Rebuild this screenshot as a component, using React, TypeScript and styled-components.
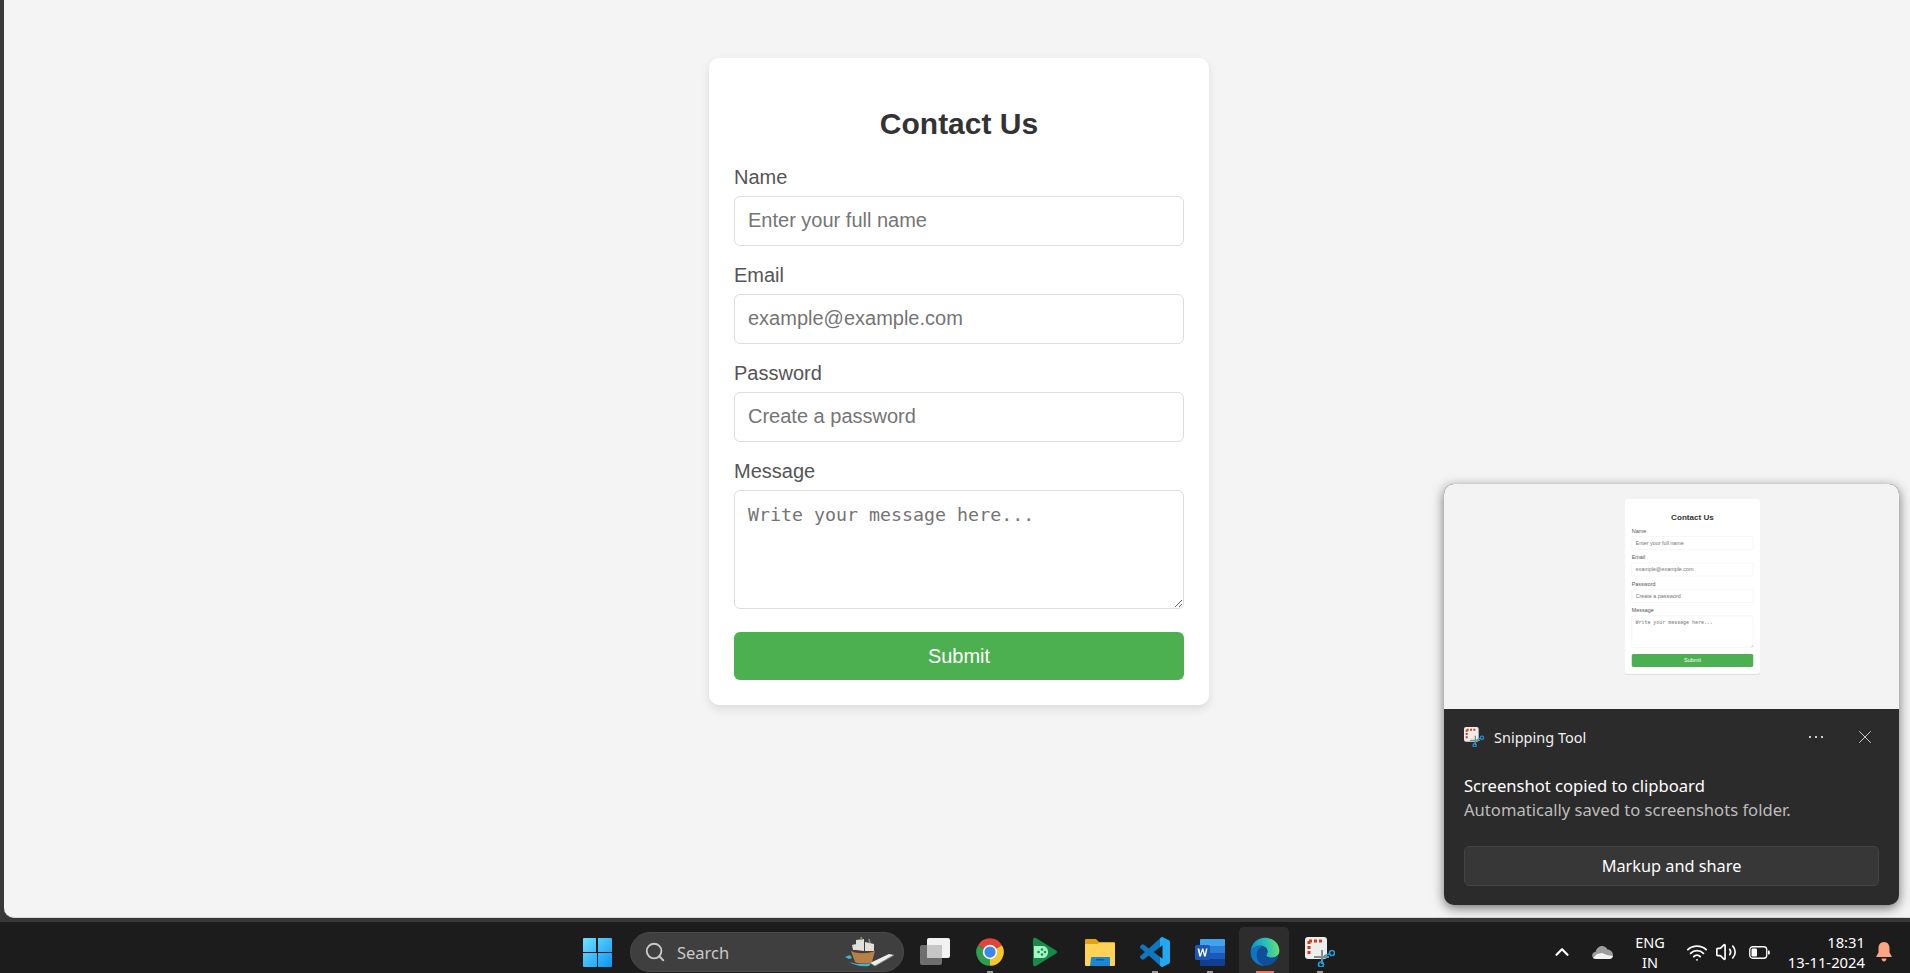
import React from 'react';
import styled, { createGlobalStyle } from 'styled-components';
import { ChevronUp, Search, Volume2, Wifi, X } from 'lucide-react';

const GlobalStyle = createGlobalStyle`
	html, body {
		margin: 0;
		padding: 0;
		height: 100%;
		overflow: hidden;
		background: #3a3a3a;
	}
	* {
		box-sizing: border-box;
	}
`;

const Desktop = styled.div`
	width: 1910px;
	height: 973px;
	position: relative;
	display: flex;
	flex-direction: column;
	overflow: hidden;
	background: #383838;
`;

const BrowserPage = styled.main`
	height: 918px;
	flex-shrink: 0;
	margin-left: 4px;
	padding: 58px 0 0 4px;
	display: flex;
	justify-content: center;
	align-items: flex-start;
	background: #f4f4f4;
	border-bottom: 1px solid #d6d6d6;
	border-bottom-left-radius: 10px;
`;

const Card = styled.form`
	width: 500px;
	flex-shrink: 0;
	padding: 25px;
	background: #fff;
	border-radius: 10px;
	box-shadow: 0 4px 10px rgba(0, 0, 0, 0.1);
	font-family: 'Liberation Sans', Arial, sans-serif;
`;

const Title = styled.h2`
	margin: 24px 0 26px;
	text-align: center;
	font-size: 30px;
	line-height: 33px;
	font-weight: 700;
	color: #333;
`;

const Label = styled.label`
	display: block;
	margin-bottom: 7px;
	font-size: 20px;
	line-height: 23px;
	color: #555;
`;

const Input = styled.input`
	display: block;
	width: 100%;
	height: 50px;
	margin-bottom: 18px;
	padding: 0 13px 2px;
	border: 1px solid #ddd;
	border-radius: 6px;
	background: #fff;
	font-family: 'Liberation Sans', Arial, sans-serif;
	font-size: 20px;
	&::placeholder {
		color: #757575;
	}
`;

const MessageBox = styled.textarea`
	display: block;
	width: 100%;
	height: 119px;
	margin-bottom: 23px;
	padding: 13px 13px;
	border: 1px solid #ddd;
	border-radius: 6px;
	background: #fff;
	font-family: 'DejaVu Sans Mono', monospace;
	font-size: 18.3px;
	resize: vertical;
	&::placeholder {
		color: #757575;
	}
`;

const SubmitButton = styled.button`
	display: block;
	width: 100%;
	height: 48px;
	border: 0;
	border-radius: 6px;
	background: #4caf50;
	color: #fff;
	font-family: 'Liberation Sans', Arial, sans-serif;
	font-size: 20px;
`;

const Toast = styled.aside`
	position: absolute;
	left: 1444px;
	top: 484px;
	width: 455px;
	height: 421px;
	display: flex;
	flex-direction: column;
	overflow: hidden;
	border-radius: 10px;
	background: #2b2b2b;
	box-shadow: 0 3px 12px rgba(0, 0, 0, 0.55);
	font-family: 'Noto Sans', 'Open Sans', sans-serif;
`;

const Preview = styled.div`
	height: 225px;
	flex-shrink: 0;
	padding-top: 15px;
	display: flex;
	justify-content: center;
	background: #f3f3f3;
`;

const PreviewFrame = styled.div`
	width: 135px;
	height: 176px;
	margin-left: 42px;
	overflow: hidden;
`;

const PreviewScale = styled.div`
	width: 500px;
	transform: scale(0.27);
	transform-origin: top left;
`;

const ToastBody = styled.div`
	flex: 1;
	padding: 18px 20px 19px;
	display: flex;
	flex-direction: column;
`;

const ToastHeader = styled.div`
	display: flex;
	align-items: center;
	height: 20px;
	color: #f0f0f0;
	font-size: 14.5px;
`;

const AppName = styled.span`
	margin-left: 10px;
	flex: 1;
`;

const MoreDots = styled.span`
	width: 14px;
	height: 2px;
	margin-right: 31px;
	background: radial-gradient(circle at 1px 1px, #cfcfcf 1px, transparent 1.2px) 0 0 / 6px 2px repeat-x;
`;

const CloseBox = styled.span`
	display: flex;
	margin-right: 3px;
	color: #d8d8d8;
`;

const ToastTitle = styled.div`
	margin-top: 27px;
	font-size: 16.6px;
	line-height: 24px;
	color: #fff;
`;

const ToastText = styled.div`
	font-size: 16.6px;
	line-height: 24px;
	color: #bdbdbd;
`;

const ToastAction = styled.button`
	margin-top: auto;
	height: 40px;
	border: 1px solid #444;
	border-radius: 5px;
	background: #373737;
	color: #fff;
	font-family: 'Noto Sans', 'Open Sans', sans-serif;
	font-size: 16.3px;
`;

const Taskbar = styled.footer`
	height: 51px;
	margin-top: 4px;
	flex-shrink: 0;
	padding: 5px 0 0 570px;
	display: flex;
	align-items: flex-start;
	background: #1c1c1c;
	font-family: 'Noto Sans', 'Open Sans', sans-serif;
	color: #fff;
`;

const AppSlot = styled.div<{ $active?: boolean; $dot?: string }>`
	width: 55px;
	height: 46px;
	padding-top: 4px;
	flex-shrink: 0;
	position: relative;
	display: flex;
	align-items: center;
	justify-content: center;
	&::before {
		content: '';
		display: ${(props) => (props.$active ? 'block' : 'none')};
		position: absolute;
		left: 2px;
		right: 3px;
		top: 0;
		bottom: 0;
		border-radius: 5px 5px 0 0;
		background: #2d2d2d;
	}
	&::after {
		content: '';
		display: ${(props) => (props.$dot ? 'block' : 'none')};
		position: absolute;
		left: 50%;
		bottom: 0;
		width: ${(props) => (props.$active ? '18px' : '6px')};
		height: 2px;
		margin-left: ${(props) => (props.$active ? '-9px' : '-3px')};
		background: ${(props) => props.$dot || 'none'};
	}
	svg {
		position: relative;
	}
`;

const SearchPill = styled.div`
	width: 274px;
	height: 40px;
	margin: 5px 3px 0 5px;
	flex-shrink: 0;
	padding: 0 8px 0 13px;
	display: flex;
	align-items: center;
	border-radius: 20px;
	border: 1px solid #4a4a4a;
	background: #3f3f3f;
	color: #c9c9c9;
	font-size: 16.5px;
`;

const SearchLabel = styled.span`
	margin-left: 11px;
	flex: 1;
`;

const Tray = styled.div`
	margin: 5px 0 0 auto;
	height: 40px;
	padding-right: 18px;
	display: flex;
	align-items: center;
`;

const TrayBox = styled.div<{ $width: number; $right?: number }>`
	width: ${(props) => props.$width}px;
	margin-right: ${(props) => props.$right || 0}px;
	display: flex;
	align-items: center;
	justify-content: center;
`;

const LangText = styled.div`
	width: 46px;
	margin-right: 13px;
	text-align: center;
	font-size: 14.5px;
	line-height: 20px;
`;

const Clock = styled.div`
	width: 95px;
	margin-right: 11px;
	text-align: right;
	font-size: 14.8px;
	line-height: 20px;
`;

const ContactForm = () => (
	<Card>
		<Title>Contact Us</Title>
		<Label>Name</Label>
		<Input placeholder='Enter your full name' />
		<Label>Email</Label>
		<Input placeholder='example@example.com' />
		<Label>Password</Label>
		<Input placeholder='Create a password' />
		<Label>Message</Label>
		<MessageBox placeholder='Write your message here...' />
		<SubmitButton type='button'>Submit</SubmitButton>
	</Card>
);

const WindowsLogo = () => (
	<svg width='29' height='29' viewBox='0 0 29 29'>
		<defs>
			<linearGradient id='win' x1='0' y1='0' x2='1' y2='1'>
				<stop offset='0' stopColor='#6fe2ff' />
				<stop offset='1' stopColor='#0a94f5' />
			</linearGradient>
		</defs>
		<path d='M1 0h12v14H0V1a1 1 0 0 1 1-1zM15 0h13a1 1 0 0 1 1 1v13H15zM0 15h14v14H1a1 1 0 0 1-1-1zM15 15h14v13a1 1 0 0 1-1 1H15z' fill='url(#win)' />
	</svg>
);

const ShipDoodle = () => (
	<svg width='52' height='32' viewBox='0 0 52 32'>
		<path d='M2 21l5-2 2 3-3 1zM6 26c6 2 14 3 22 1l-2 3c-8 1-15-1-20-4z' fill='#3fb7d4' />
		<path d='M8 15c6 3 16 3 24 0l-3 11c-6 2-13 2-17 0z' fill='#b97f46' />
		<path d='M13 4l8-1v12l-8-1zM22 6l9 2v7l-9 0zM9 9l4-1v6l-3 0z' fill='#e2dfd8' />
		<path d='M18 1l1 3M26 3l1 4' stroke='#8d8d8d' strokeWidth='1.5' />
		<path d='M27 27l19-9 5 1-19 11z' fill='#efeee8' />
		<path d='M27 27l5 3 19-11' stroke='#7e8f8f' fill='none' />
	</svg>
);

const TaskViewIcon = () => (
	<svg width='30' height='30' viewBox='0 0 30 30'>
		<rect x='0' y='8' width='22' height='20' rx='2' fill='#6e6e6e' />
		<rect x='7' y='1' width='23' height='20' rx='2' fill='#f1f1f1' />
		<rect x='7' y='8' width='15' height='13' fill='#c6c6c6' />
	</svg>
);

const ChromeIcon = () => (
	<svg width='30' height='30' viewBox='0 0 48 48'>
		<path d='M24 24L4.9 13A22 22 0 0 1 43.1 13z' fill='#e0443a' />
		<path d='M24 24L43.1 13A22 22 0 0 1 24 46z' fill='#f7c62f' />
		<path d='M24 24L24 46A22 22 0 0 1 4.9 13z' fill='#2f9e4f' />
		<circle cx='24' cy='24' r='11.5' fill='#fff' />
		<circle cx='24' cy='24' r='9' fill='#3f86ea' />
	</svg>
);

const PlayGamesIcon = () => (
	<svg width='26' height='30' viewBox='0 0 26 30'>
		<path d='M1 2.5C1 1 2.5.4 4 1l20 12.4c1.400.9 1.400 2.300 0 3.200L4 29c-1.500.6-3 0-3-1.500z' fill='#168a46' />
		<path d='M2 9h9c3 0 5 3 5 6s-2 6-5 6H2z' fill='#a6f5c4' />
		<circle cx='6.500' cy='15' r='1.300' fill='#168a46' />
		<circle cx='10' cy='12.500' r='1.200' fill='#168a46' />
		<circle cx='10' cy='17.500' r='1.200' fill='#168a46' />
		<circle cx='13' cy='15' r='1.200' fill='#168a46' />
	</svg>
);

const FolderIcon = () => (
	<svg width='30' height='27' viewBox='0 0 30 27'>
		<path d='M1 0h10l3 3h15a1 1 0 0 1 1 1v6H0V1a1 1 0 0 1 1-1z' fill='#e3a30c' />
		<path d='M0 5h12l2-1h15a1 1 0 0 1 1 1v21a1 1 0 0 1-1 1H1a1 1 0 0 1-1-1z' fill='#fdd257' />
		<path d='M6 19a1 1 0 0 1 1-1h17a1 1 0 0 1 1 1v8H5z' fill='#1a86d6' />
		<rect x='11' y='20' width='8' height='1.500' fill='#0d5c9c' />
	</svg>
);

const VsCodeIcon = () => (
	<svg width='30' height='30' viewBox='0 0 24 24'>
		<defs>
			<linearGradient id='vs' x1='0' y1='0' x2='1' y2='0'>
				<stop offset='0.68' stopColor='#0f77c0' />
				<stop offset='0.68' stopColor='#23a8f2' />
			</linearGradient>
		</defs>
		<path
			d='M23.15 2.587L18.21.21a1.494 1.494 0 0 0-1.705.29l-9.46 8.63-4.12-3.128a.999.999 0 0 0-1.276.057L.327 7.261A1 1 0 0 0 .326 8.74L3.899 12 .326 15.26a1 1 0 0 0 .001 1.479L1.65 17.94a.999.999 0 0 0 1.276.057l4.12-3.128 9.46 8.63a1.492 1.492 0 0 0 1.704.29l4.942-2.377A1.5 1.5 0 0 0 24 20.06V3.939a1.5 1.5 0 0 0-.85-1.352zm-5.146 14.861L10.826 12l7.178-5.448v10.896z'
			fill='url(#vs)'
		/>
	</svg>
);

const WordIcon = () => (
	<svg width='30' height='27' viewBox='0 0 30 27'>
		<rect x='5' y='0' width='25' height='7' rx='1' fill='#41a5ee' />
		<rect x='5' y='7' width='25' height='7' fill='#2b7cd3' />
		<rect x='5' y='14' width='25' height='7' fill='#185abd' />
		<rect x='5' y='20' width='25' height='7' rx='1' fill='#103f91' />
		<rect x='0' y='6' width='15' height='15' rx='1.500' fill='#1b58b5' />
		<path d='M2.500 9.500l1.800 8h1.600l1.600-5.500 1.600 5.500h1.600l1.800-8h-1.500l-1.100 5.500-1.600-5.500H7l-1.600 5.500-1.100-5.500z' fill='#fff' />
	</svg>
);

const EdgeIcon = () => (
	<svg width='30' height='30' viewBox='0 0 48 48'>
		<defs>
			<linearGradient id='edgeTop' x1='0' y1='0.6' x2='1' y2='0.5'>
				<stop offset='0' stopColor='#0c8fd0' />
				<stop offset='0.6' stopColor='#2ec3b4' />
				<stop offset='1' stopColor='#6ee06a' />
			</linearGradient>
		</defs>
		<path d='M1 23C2 10 12 1 24 1c14 0 23 10 23 21 0 7-5 11-12 11-5 0-9-2-9-4 0-1 2-2 2-6 0-5-5-9-11-9C9 14 3 18 1 23z' fill='url(#edgeTop)' />
		<path d='M1 23c2-6 9-10 16-9 2 1 3 1 4 2-6 1-10 6-10 13 0 8 6 15 14 17C12 47 0 37 1 23z' fill='#0d75c2' />
		<path d='M21 16c5 1 7 4 7 7 0 3-2 4-2 6 0 3 5 5 10 4 4 0 8-2 10-5-2 10-11 18-21 18-8-2-14-9-14-17 0-7 4-12 10-13z' fill='#0f4e9a' />
	</svg>
);

const SnipIcon = ({ size }: { size: number }) => (
	<svg width={size} height={size} viewBox='0 0 30 30'>
		<rect x='0' y='0' width='22' height='22' rx='3' fill='#ededed' />
		<path d='M4 4h3M9 4h3M14 4h3M4 4v3M4 9v3M4 14v3' stroke='#d23a1c' strokeWidth='3' fill='none' />
		<path d='M9 20L24 20M17 13l0 14' stroke='#8a8a8a' strokeWidth='2' />
		<circle cx='27' cy='16' r='2.500' fill='none' stroke='#1e9be0' strokeWidth='1.700' />
		<circle cx='16' cy='27.500' r='2.500' fill='none' stroke='#1e9be0' strokeWidth='1.700' />
		<path d='M19 19l5-2M18 21l-1 4' stroke='#1e9be0' strokeWidth='1.500' />
	</svg>
);

const CloudIcon = () => (
	<svg width='21' height='13' viewBox='0 0 21 13'>
		<path d='M4 13a3.500 3.500 0 0 1-.5-7C4.500 2.500 7 0 10 0c2.500 0 4.500 1.500 5.500 3.500 3 0 5.500 2.500 5.500 5.500 0 2-1.500 4-3.500 4z' fill='#9c9c9c' />
		<path d='M1 12l4-4 5-1 5 2 6 1-1 2-2 1H4z' fill='#f2f2f2' />
	</svg>
);

const BatteryIcon = () => (
	<svg width='21' height='13' viewBox='0 0 21 13'>
		<rect x='.75' y='.75' width='17' height='11.500' rx='3' fill='none' stroke='#fff' strokeWidth='1.300' />
		<rect x='2.500' y='2.500' width='5.500' height='8' rx='1.200' fill='#fff' />
		<path d='M19 4.500h.6a1.200 1.200 0 0 1 1.200 1.200v1.600a1.200 1.200 0 0 1-1.200 1.200H19z' fill='#fff' />
	</svg>
);

const BellIcon = () => (
	<svg width='16' height='20' viewBox='0 0 16 20'>
		<path d='M8 0c3.500 0 5.500 2.800 5.500 6v4.500L16 15H0l2.500-4.500V6C2.500 2.800 4.500 0 8 0z' fill='#fba583' />
		<path d='M5.500 16.500h5C10.200 18.500 9.200 19.500 8 19.500s-2.200-1-2.500-3z' fill='#fba583' />
	</svg>
);

const App = () => {
	return (
		<Desktop>
			<GlobalStyle />
			<BrowserPage>
				<ContactForm />
			</BrowserPage>
			<Taskbar>
				<AppSlot>
					<WindowsLogo />
				</AppSlot>
				<SearchPill>
					<Search size={22} strokeWidth={2} />
					<SearchLabel>Search</SearchLabel>
					<ShipDoodle />
				</SearchPill>
				<AppSlot>
					<TaskViewIcon />
				</AppSlot>
				<AppSlot $dot='#9a9a9a'>
					<ChromeIcon />
				</AppSlot>
				<AppSlot>
					<PlayGamesIcon />
				</AppSlot>
				<AppSlot>
					<FolderIcon />
				</AppSlot>
				<AppSlot $dot='#9a9a9a'>
					<VsCodeIcon />
				</AppSlot>
				<AppSlot $dot='#9a9a9a'>
					<WordIcon />
				</AppSlot>
				<AppSlot $active $dot='#f0705a'>
					<EdgeIcon />
				</AppSlot>
				<AppSlot $dot='#9a9a9a'>
					<SnipIcon size={30} />
				</AppSlot>
				<Tray>
					<TrayBox $width={30}>
						<ChevronUp size={22} strokeWidth={2.4} />
					</TrayBox>
					<TrayBox $width={50}>
						<CloudIcon />
					</TrayBox>
					<LangText>
						ENG
						<br />
						IN
					</LangText>
					<TrayBox $width={22} $right={7}>
						<Wifi size={23} strokeWidth={2} />
					</TrayBox>
					<TrayBox $width={22} $right={11}>
						<Volume2 size={22} strokeWidth={1.8} />
					</TrayBox>
					<TrayBox $width={22}>
						<BatteryIcon />
					</TrayBox>
					<Clock>
						18:31
						<br />
						13-11-2024
					</Clock>
					<BellIcon />
				</Tray>
			</Taskbar>
			<Toast>
				<Preview>
					<PreviewFrame>
						<PreviewScale>
							<ContactForm />
						</PreviewScale>
					</PreviewFrame>
				</Preview>
				<ToastBody>
					<ToastHeader>
						<SnipIcon size={20} />
						<AppName>Snipping Tool</AppName>
						<MoreDots />
						<CloseBox>
							<X size={22} strokeWidth={1} />
						</CloseBox>
					</ToastHeader>
					<ToastTitle>Screenshot copied to clipboard</ToastTitle>
					<ToastText>Automatically saved to screenshots folder.</ToastText>
					<ToastAction type='button'>Markup and share</ToastAction>
				</ToastBody>
			</Toast>
		</Desktop>
	);
};

export default App;
